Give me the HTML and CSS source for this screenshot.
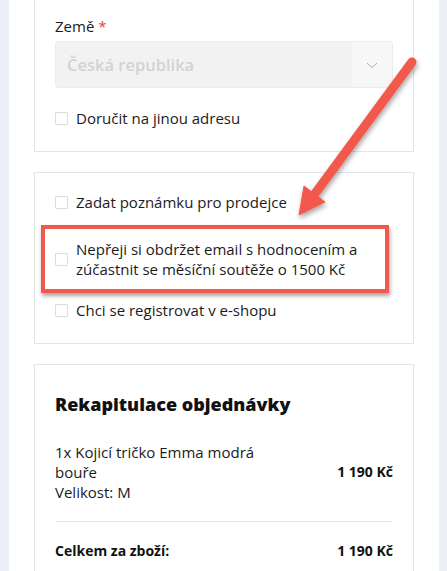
FILE: index.html
```html
<!DOCTYPE html>
<html lang="cs">
<head>
<meta charset="utf-8">
<link rel="stylesheet" href="styles.css">
</head>
<body>
<div class="page">
  <div class="card card-first">
    <div class="label">Země <span class="req">*</span></div>
    <div class="select">
      <div class="select-value">Česká republika</div>
      <div class="select-btn">
        <svg width="12" height="7" viewBox="0 0 12 7"><path d="M1 1 L6 5.5 L11 1" fill="none" stroke="#9a9a9a" stroke-width="0.8"/></svg>
      </div>
    </div>
    <div class="check-row check-gap"><span class="box"></span><span>Doručit na jinou adresu</span></div>
  </div>

  <div class="card card-second">
    <div class="check-row"><span class="box"></span><span>Zadat poznámku pro prodejce</span></div>
    <div class="highlight">
      <div class="check-row multi"><span class="box"></span><span>Nepřeji si obdržet email s hodnocením a<br>zúčastnit se měsíční soutěže o 1500 Kč</span></div>
    </div>
    <div class="check-row check-last"><span class="box"></span><span>Chci se registrovat v e-shopu</span></div>
  </div>

  <div class="card card-third">
    <h2 class="title">Rekapitulace objednávky</h2>
    <div class="item">
      <div class="item-name">1x Kojicí tričko Emma modrá<br>bouře<br>Velikost: M</div>
      <div class="price">1 190 Kč</div>
    </div>
    <div class="divider"></div>
    <div class="total">
      <div class="total-label">Celkem za zboží:</div>
      <div class="price">1 190 Kč</div>
    </div>
  </div>
</div>
<svg class="arrow" width="447" height="571" viewBox="0 0 447 571">
  <defs>
    <filter id="sh" x="-20%" y="-20%" width="140%" height="140%">
      <feDropShadow dx="1" dy="3" stdDeviation="2.5" flood-color="#000" flood-opacity="0.35"/>
    </filter>
  </defs>
  <g filter="url(#sh)" fill="#f2584b" stroke="#f2584b">
    <line x1="412" y1="62" x2="314" y2="195" stroke-width="9" stroke-linecap="round"/>
    <polygon points="299,215 304,186 325,202" stroke-width="1" stroke-linejoin="round"/>
  </g>
</svg>
</body>
</html>
```
FILE: styles.css
```css
* { box-sizing: border-box; }
html, body { margin: 0; padding: 0; }
body {
  background: #eceef8;
  font-family: "Open Sans", "Liberation Sans", sans-serif;
  color: #1b1b1b;
  font-size: 15px;
  width: 447px;
  height: 571px;
  overflow: hidden;
  position: relative;
}
.page {
  margin-left: 9px;
  width: 430px;
  height: 571px;
  background: #fff;
  padding: 0 25px;
}
.card {
  border: 1px solid #e4e4e4;
  padding: 0 20px;
}
.card-first {
  border-top: none;
  padding-top: 16px;
  padding-bottom: 21px;
}
.label {
  line-height: 20px;
  font-size: 15px;
}
.req { color: #d9452b; }
.select {
  margin-top: 5px;
  height: 47px;
  display: flex;
  background: #f2f2f2;
  border: 1px solid #ececec;
  border-radius: 3px;
}
.select-value {
  flex: 1;
  display: flex;
  align-items: center;
  padding-left: 11px;
  color: #d2d2d2;
  font-size: 16.5px;
  font-weight: 600;
}
.select-btn {
  width: 40px;
  background: #f7f7f7;
  display: flex;
  align-items: center;
  justify-content: center;
  padding-top: 2px;
}
.check-row {
  display: flex;
  align-items: center;
  gap: 8px;
  line-height: 24px;
  font-size: 15px;
}
.check-gap { margin-top: 18px; }
.box {
  width: 13px;
  height: 13px;
  border: 1px solid #dcdcdc;
  border-radius: 1px;
  flex: none;
  background: #fff;
}
.card-second {
  margin-top: 20px;
  padding-top: 17px;
  padding-bottom: 21px;
}
.highlight {
  margin: 11px 0 0 -14px;
  width: 348px;
  height: 68px;
  border: 4px solid #f2584b;
  padding: 10px 0 0 10px;
  box-shadow: 1px 3px 4px rgba(0,0,0,0.35);
}
.multi { line-height: 20px; }
.check-last { margin-top: 5px; }
.card-third {
  margin-top: 20px;
  padding-top: 25px;
  height: 220px;
}
.title {
  margin: 0;
  font-size: 18px;
  line-height: 28px;
  font-weight: 800;
  color: #111;
}
.item {
  margin-top: 24px;
  display: flex;
  align-items: center;
  justify-content: space-between;
  line-height: 20px;
}
.price { font-weight: 700; font-size: 14px; color: #111; }
.divider {
  margin-top: 19px;
  height: 1px;
  background: #e8e8e8;
}
.total {
  margin-top: 19px;
  display: flex;
  justify-content: space-between;
  line-height: 20px;
}
.total-label { font-weight: 700; font-size: 14px; color: #111; }
.arrow {
  position: absolute;
  left: 0;
  top: 0;
  pointer-events: none;
}
```
